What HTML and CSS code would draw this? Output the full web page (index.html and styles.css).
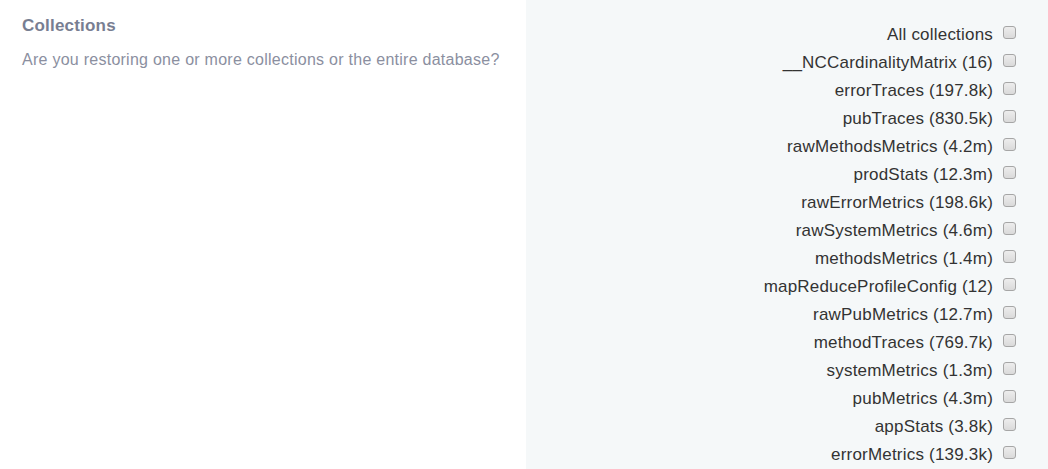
FILE: index.html
```html
<!DOCTYPE html>
<html>
<head>
<meta charset="utf-8">
<link rel="stylesheet" href="styles.css">
</head>
<body>
<div class="page">
  <section class="intro">
    <h2 class="title">Collections</h2>
    <p class="desc">Are you restoring one or more collections or the entire database?</p>
  </section>
  <section class="choices">
    <label class="row"><span class="name">All collections</span><input type="checkbox" class="box"></label>
    <label class="row"><span class="name">__NCCardinalityMatrix (16)</span><input type="checkbox" class="box"></label>
    <label class="row"><span class="name">errorTraces (197.8k)</span><input type="checkbox" class="box"></label>
    <label class="row"><span class="name">pubTraces (830.5k)</span><input type="checkbox" class="box"></label>
    <label class="row"><span class="name">rawMethodsMetrics (4.2m)</span><input type="checkbox" class="box"></label>
    <label class="row"><span class="name">prodStats (12.3m)</span><input type="checkbox" class="box"></label>
    <label class="row"><span class="name">rawErrorMetrics (198.6k)</span><input type="checkbox" class="box"></label>
    <label class="row"><span class="name">rawSystemMetrics (4.6m)</span><input type="checkbox" class="box"></label>
    <label class="row"><span class="name">methodsMetrics (1.4m)</span><input type="checkbox" class="box"></label>
    <label class="row"><span class="name">mapReduceProfileConfig (12)</span><input type="checkbox" class="box"></label>
    <label class="row"><span class="name">rawPubMetrics (12.7m)</span><input type="checkbox" class="box"></label>
    <label class="row"><span class="name">methodTraces (769.7k)</span><input type="checkbox" class="box"></label>
    <label class="row"><span class="name">systemMetrics (1.3m)</span><input type="checkbox" class="box"></label>
    <label class="row"><span class="name">pubMetrics (4.3m)</span><input type="checkbox" class="box"></label>
    <label class="row"><span class="name">appStats (3.8k)</span><input type="checkbox" class="box"></label>
    <label class="row"><span class="name">errorMetrics (139.3k)</span><input type="checkbox" class="box"></label>
  </section>
</div>
</body>
</html>
```

FILE: styles.css
```css
html, body {
  margin: 0;
  padding: 0;
  background: #ffffff;
  font-family: "Liberation Sans", Arial, sans-serif;
}

.page {
  display: grid;
  grid-template-columns: 526px 1fr;
  min-height: 469px;
}

.intro {
  padding: 16px 22px 0 22px;
}

.title {
  margin: 0;
  font-size: 17px;
  line-height: 20px;
  font-weight: bold;
  letter-spacing: 0.2px;
  color: #787e92;
}

.desc {
  margin: 14px 0 0 0;
  font-size: 16px;
  line-height: 20px;
  letter-spacing: 0.26px;
  color: #8b8f9f;
}

.choices {
  background: #f5f8f9;
  padding: 21px 32px 8px 0;
  display: flex;
  flex-direction: column;
  align-items: flex-end;
}

.row {
  display: flex;
  align-items: center;
  gap: 10px;
  height: 28px;
  font-size: 17px;
  line-height: 28px;
  letter-spacing: 0.2px;
  color: #333333;
}

.box {
  -webkit-appearance: none;
  appearance: none;
  margin: 0 0 5px 0;
  width: 13px;
  height: 13px;
  box-sizing: border-box;
  border: 1px solid #a6a6a6;
  border-radius: 3px;
  background: linear-gradient(#ededed, #dadada);
}
```
